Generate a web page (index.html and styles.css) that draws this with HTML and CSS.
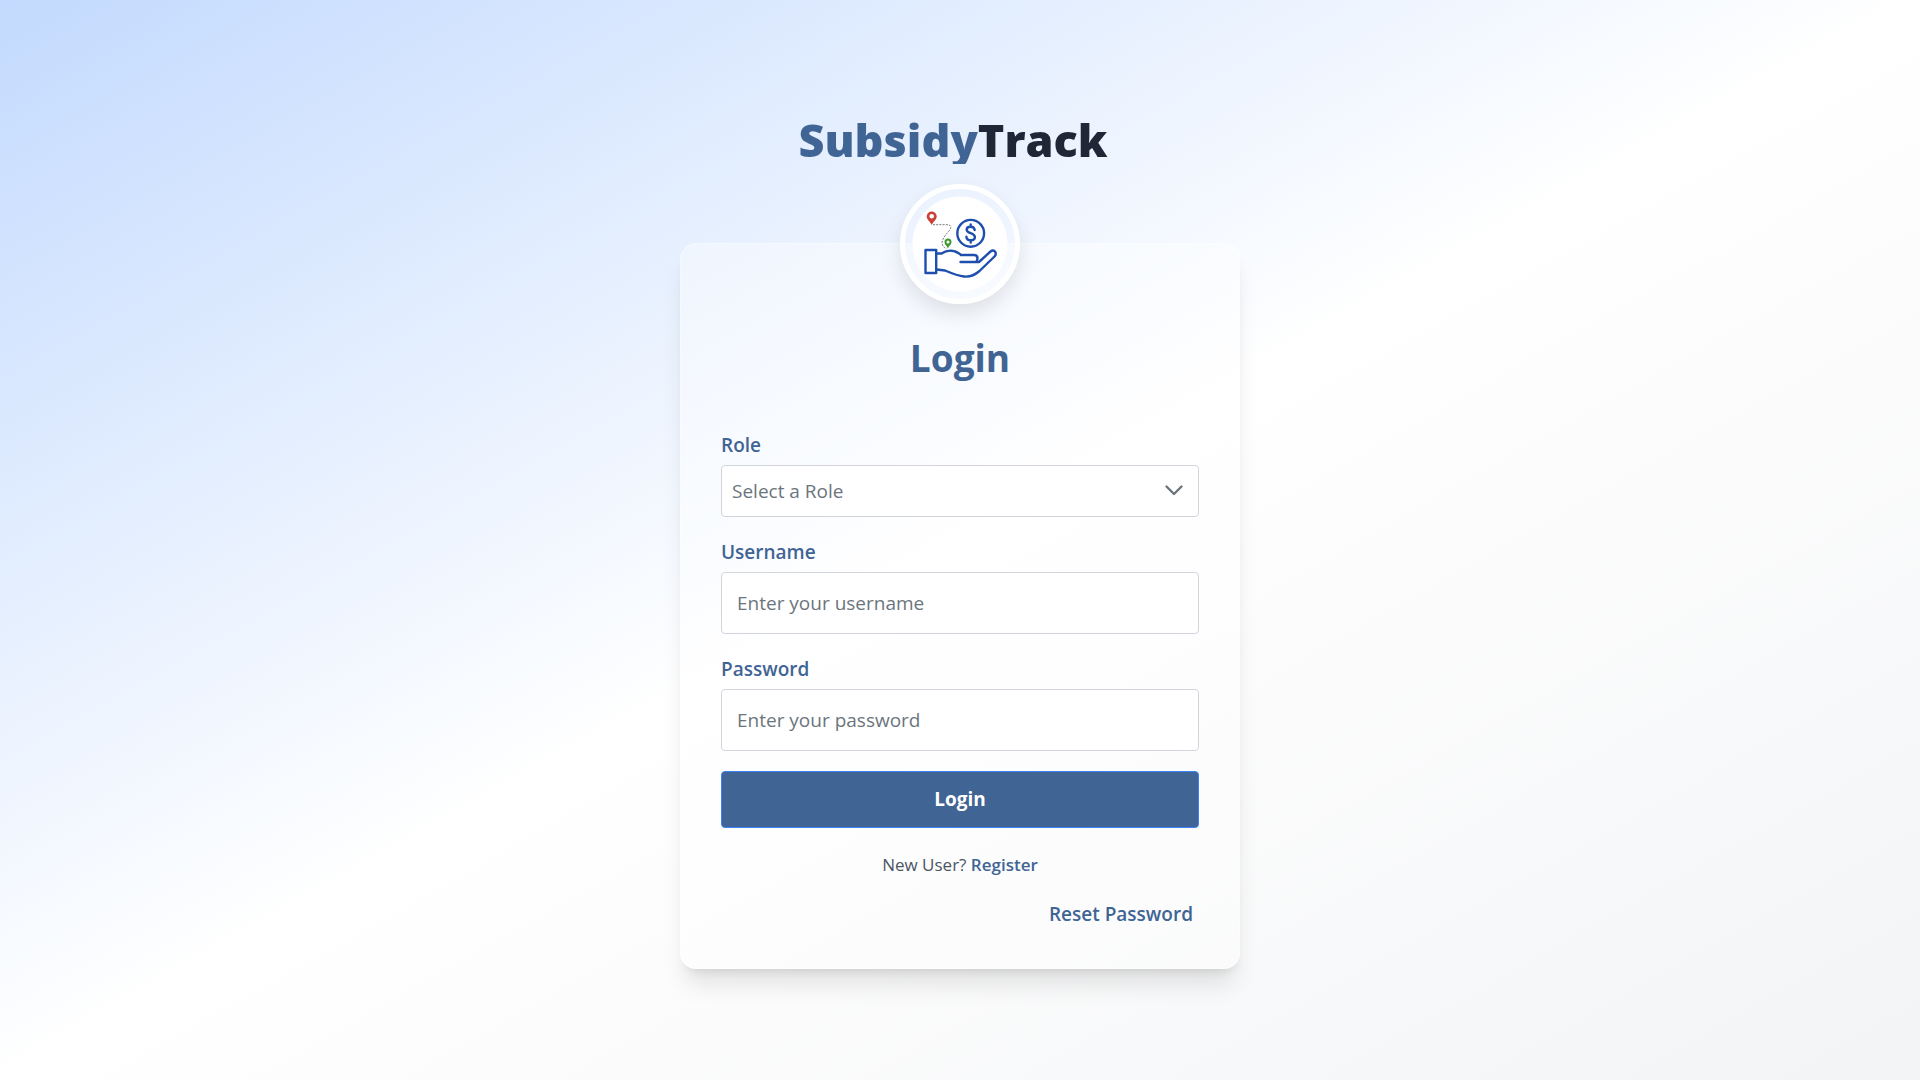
FILE: index.html
```html
<!DOCTYPE html>
<html lang="en">
<head>
  <meta charset="utf-8">
  <meta name="viewport" content="width=device-width, initial-scale=1">
  <title>SubsidyTrack - Login</title>
  <link rel="stylesheet" href="styles.css">
</head>
<body>
  <main class="page">
    <h1 class="brand"><span class="brand-first">Subsidy</span><span class="brand-second">Track</span></h1>
    <section class="card">
      <div class="badge">
        <svg class="logo" viewBox="0 0 96 96" aria-hidden="true">
          <circle cx="48" cy="48" r="47.500" fill="#fff"/>
          <path d="M21 28.700H34C40 28.700 40 31.500 36.500 35.500C32.500 40 28 46 31 50Q32 52 35 52.300" fill="none" stroke="#555" stroke-width="0.800" stroke-dasharray="2 1.200"/>
          <path fill="#cb4139" fill-rule="evenodd" d="M19.700 29C17.700 25 14.700 23.500 14.700 20.500a5 5 0 0 1 10 0C24.700 23.500 21.700 25 19.700 29ZM19.700 18a2.300 2.300 0 1 0 0 4.600a2.300 2.300 0 1 0 0-4.600Z"/>
          <path fill="#3d9a2c" fill-rule="evenodd" d="M36 52.500C34.500 49 32.500 48.500 32.500 46a3.500 3.500 0 0 1 7 0C39.500 48.500 37.500 49 36 52.500ZM36 44.400a1.500 1.500 0 1 0 0 3a1.500 1.500 0 1 0 0-3Z"/>
          <g fill="none" stroke="#1e4fae" stroke-width="2.400" stroke-linejoin="round" stroke-linecap="round">
            <circle cx="58.700" cy="37.300" r="13.400"/>
            <path d="M62.700 34C62 29.500 54.700 30 54.700 33.700C54.700 37.800 62.900 36.500 62.900 41C62.900 45.200 54.900 45.500 54.400 40.800M58.700 28.500V30.500M58.700 44.500V46.500"/>
            <path d="M13.500 54h10.700v23H13.500z"/>
            <path d="M24.500 57.500H29.500C35.500 53.500 43 53.500 49 59H62Q65.500 59 65.500 62.500L64.500 66H48.500M64.500 66H67L78.500 55.500Q81 53.500 83 55.500Q84.700 58 82.500 60.500L67.500 75Q60 81.500 52 80.500Q46 80 33 74.500L24.500 73.500"/>
          </g>
        </svg>
      </div>
      <h2 class="heading">Login</h2>
      <form class="form">
        <div class="field">
          <label class="label" for="role">Role</label>
          <div class="select-wrap">
            <select class="control select" id="role">
              <option>Select a Role</option>
            </select>
            <svg class="chevron" viewBox="0 0 20 20" aria-hidden="true"><path d="M2.500 5.500L10 13L17.500 5.500" fill="none" stroke="#6c757d" stroke-width="2.400" stroke-linecap="round" stroke-linejoin="round"/></svg>
          </div>
        </div>
        <div class="field">
          <label class="label" for="username">Username</label>
          <input class="control input" id="username" type="text" placeholder="Enter your username">
        </div>
        <div class="field">
          <label class="label" for="password">Password</label>
          <input class="control input" id="password" type="password" placeholder="Enter your password">
        </div>
        <button class="submit" type="submit">Login</button>
      </form>
      <p class="register">New User? <a class="link" href="#register">Register</a></p>
      <p class="reset"><a class="link" href="#reset">Reset Password</a></p>
    </section>
  </main>
</body>
</html>
```

FILE: styles.css
```css
* {
  box-sizing: border-box;
}

body {
  margin: 0;
  font-family: "Open Sans", "Noto Sans", sans-serif;
  font-size: 19px;
  line-height: 28px;
  color: #4b5563;
}

h1,
h2,
p {
  margin: 0;
}

.page {
  min-height: 100vh;
  padding: 36px 16px 32px;
  display: flex;
  flex-direction: column;
  align-items: center;
  justify-content: center;
  gap: 79px;
  background: linear-gradient(to bottom right, #c3dafe, #fff, #f3f4f6);
}

.brand {
  display: flex;
  padding-right: 14px;
  font-size: 45px;
  line-height: 48px;
  font-weight: 800;
}

.brand-first,
.brand-second {
  background-clip: text;
  color: transparent;
}

.brand-first {
  background-color: #406494;
}

.brand-second {
  background-color: #1f2636;
}

.card {
  position: relative;
  width: 100%;
  max-width: 560px;
  padding: 90px 40px 40px;
  border: 1px solid rgba(255, 255, 255, 0.3);
  border-radius: 16px;
  background: rgba(255, 255, 255, 0.4);
  box-shadow: 0 20px 25px -5px rgba(0, 0, 0, 0.1), 0 8px 10px -6px rgba(0, 0, 0, 0.1);
}

.badge {
  position: absolute;
  top: -60px;
  left: calc(50% - 60px);
  width: 120px;
  height: 120px;
  padding: 7px;
  border: 5px solid #fff;
  border-radius: 50%;
  box-shadow: 0 10px 20px rgba(0, 0, 0, 0.1);
}

.logo {
  display: block;
  width: 96px;
  height: 96px;
}

.heading {
  margin-bottom: 48px;
  font-size: 37px;
  line-height: 48px;
  font-weight: 700;
  text-align: center;
  color: #406494;
}

.form {
  display: flex;
  flex-direction: column;
  gap: 20px;
}

.field {
  display: flex;
  flex-direction: column;
  gap: 5px;
}

.label {
  font-weight: 600;
  line-height: 30px;
  color: #406494;
}

.control {
  width: 100%;
  border: 1px solid #d1d5db;
  border-radius: 4px;
  background: #fff;
  font: inherit;
  color: #6c757d;
}

.select-wrap {
  display: grid;
  align-items: center;
}

.select-wrap > * {
  grid-area: 1 / 1;
}

.select {
  height: 52px;
  padding: 0 40px 0 10px;
  appearance: none;
}

.chevron {
  justify-self: end;
  width: 20px;
  height: 20px;
  margin-right: 15px;
  pointer-events: none;
}

.input {
  height: 62px;
  padding: 0 15px;
}

.input::placeholder {
  color: #6c757d;
  opacity: 1;
}

.submit {
  height: 57px;
  border: 1px solid #3b82f6;
  border-radius: 4px;
  background: #406494;
  font: inherit;
  font-weight: 700;
  color: #fff;
  cursor: pointer;
}

.link {
  font-weight: 600;
  color: #406494;
  text-decoration: none;
}

.register {
  margin-top: 23px;
  font-size: 17px;
  text-align: center;
}

.reset {
  margin-top: 21px;
  padding-right: 6px;
  text-align: right;
}
```
